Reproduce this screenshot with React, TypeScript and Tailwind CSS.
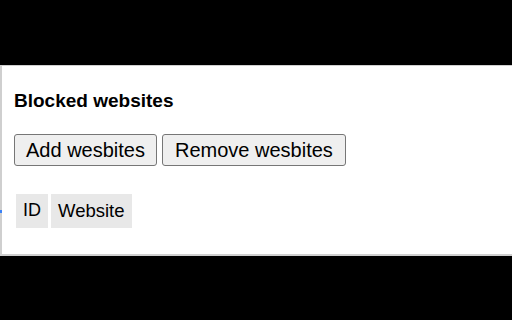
import React from "react";

export default function App() {
  return (
    <div className="w-[512px] h-[320px] bg-black flex flex-col justify-center overflow-hidden" style={{ fontFamily: '"Liberation Sans", Arial, sans-serif' }}>
      <div className="relative h-[191px] bg-white border-t border-b-2 border-l-2 border-[#cfcfcf] pl-[12px] pt-[25px] text-black">
        <span className="absolute left-[-2px] top-[144px] w-[2px] h-[3px] bg-[#3b82f6]" />
        <h1 className="text-[19px] leading-[20px] font-bold m-0">Blocked websites</h1>
        <div className="flex gap-[5px] mt-[23px]">
          <button className="h-[32px] px-[11px] text-[20px] leading-none bg-[#efefef] border border-[#767676] rounded-[3px] text-black">
            Add wesbites
          </button>
          <button className="h-[32px] px-[12px] text-[20px] leading-none bg-[#efefef] border border-[#767676] rounded-[3px] text-black">
            Remove wesbites
          </button>
        </div>
        <div className="flex gap-[3px] mt-[28px] ml-[2px]">
          <div className="h-[34px] px-[7px] flex items-center bg-[#e8e8e8] text-[18px]">ID</div>
          <div className="h-[34px] px-[7px] flex items-center bg-[#e8e8e8] text-[18.5px]">Website</div>
        </div>
      </div>
    </div>
  );
}
